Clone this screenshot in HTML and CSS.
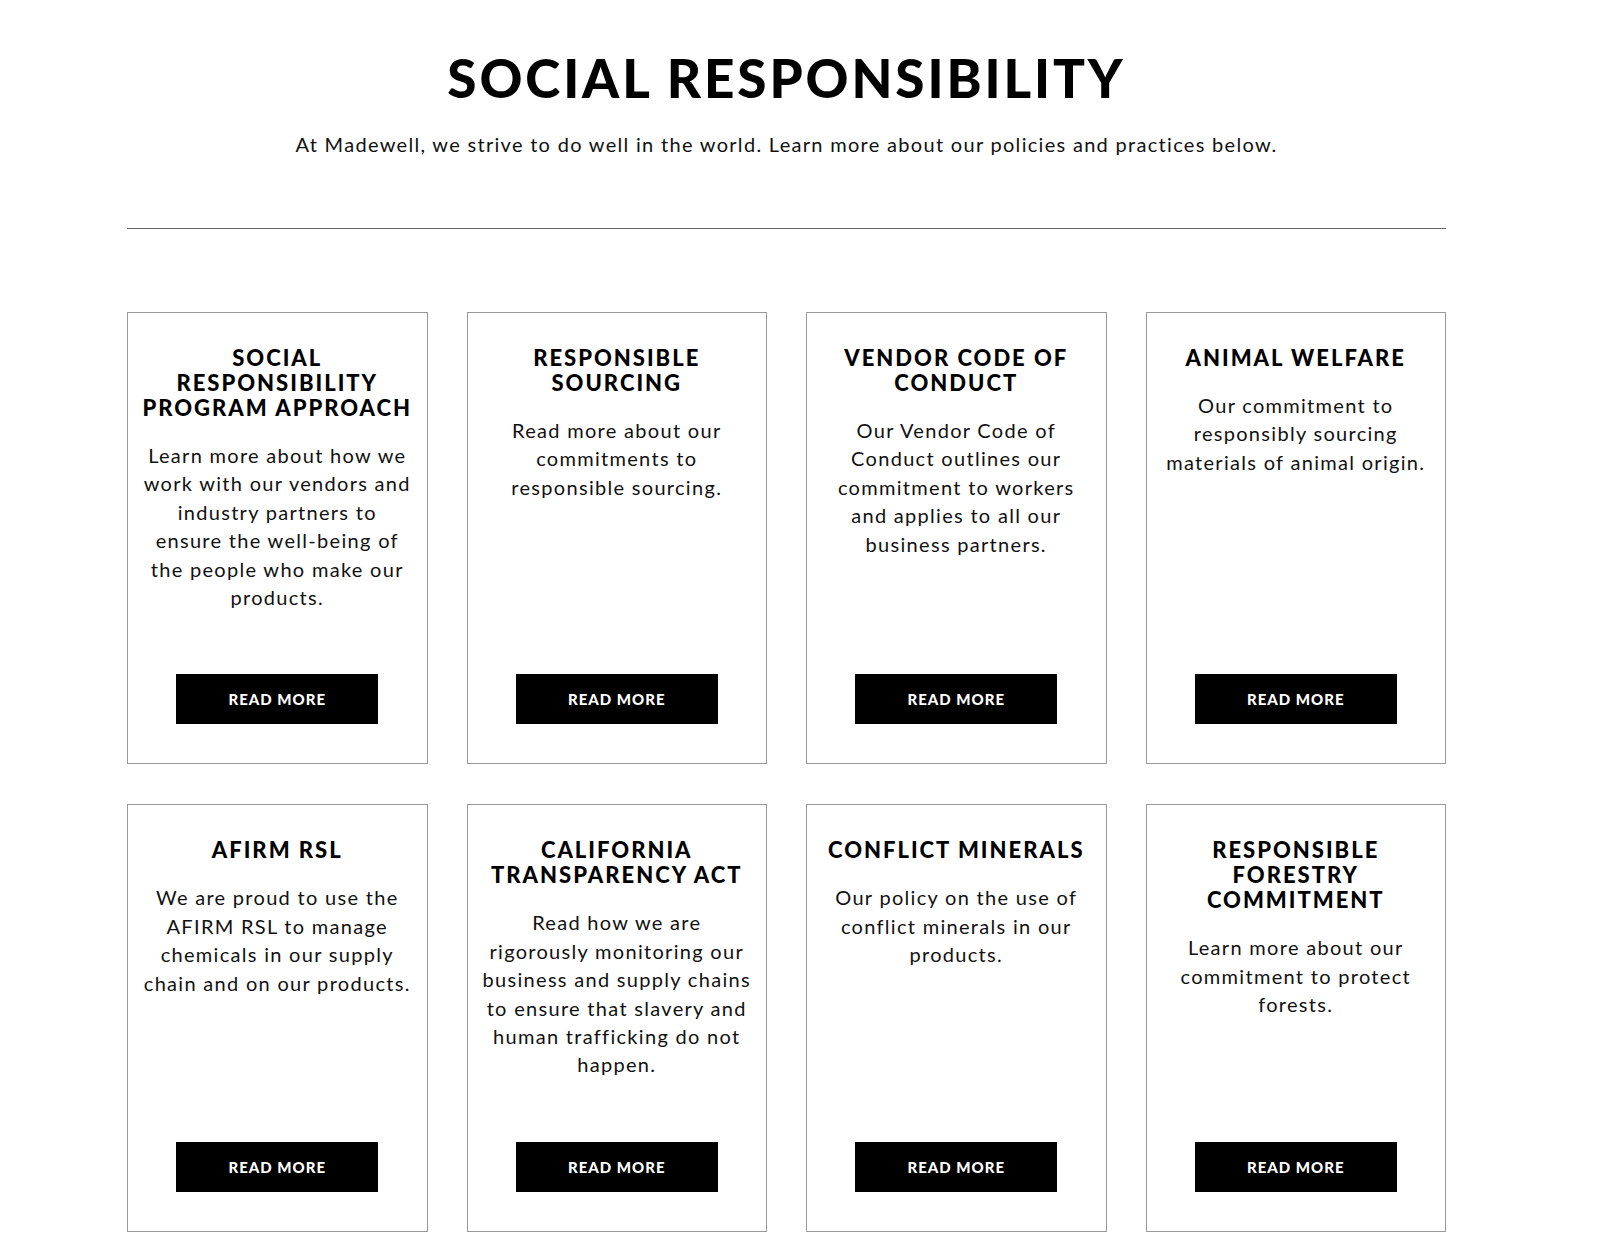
FILE: index.html
```html
<!DOCTYPE html>
<html lang="en">
<head>
  <meta charset="UTF-8">
  <title>Social Responsibility</title>
  <link rel="stylesheet" href="styles.css">
</head>
<body>
  <div class="page">
    <header class="page-header">
      <h1>Social Responsibility</h1>
      <p class="intro">At Madewell, we strive to do well in the world. Learn more about our policies and practices below.</p>
    </header>

    <hr class="divider">

    <div class="card-grid">
      <div class="card">
        <h3>Social Responsibility Program Approach</h3>
        <p>Learn more about how we work with our vendors and industry partners to ensure the well-being of the people who make our products.</p>
        <a href="#" class="btn">Read More</a>
      </div>

      <div class="card">
        <h3>Responsible Sourcing</h3>
        <p>Read more about our commitments to responsible sourcing.</p>
        <a href="#" class="btn">Read More</a>
      </div>

      <div class="card">
        <h3>Vendor Code of Conduct</h3>
        <p>Our Vendor Code of Conduct outlines our commitment to workers and applies to all our business partners.</p>
        <a href="#" class="btn">Read More</a>
      </div>

      <div class="card">
        <h3>Animal Welfare</h3>
        <p>Our commitment to responsibly sourcing materials of animal origin.</p>
        <a href="#" class="btn">Read More</a>
      </div>

      <div class="card">
        <h3>AFIRM RSL</h3>
        <p>We are proud to use the AFIRM RSL to manage chemicals in our supply chain and on our products.</p>
        <a href="#" class="btn">Read More</a>
      </div>

      <div class="card">
        <h3>California Transparency Act</h3>
        <p>Read how we are rigorously monitoring our business and supply chains to ensure that slavery and human trafficking do not happen.</p>
        <a href="#" class="btn">Read More</a>
      </div>

      <div class="card">
        <h3>Conflict Minerals</h3>
        <p>Our policy on the use of conflict minerals in our products.</p>
        <a href="#" class="btn">Read More</a>
      </div>

      <div class="card">
        <h3>Responsible Forestry Commitment</h3>
        <p>Learn more about our commitment to protect forests.</p>
        <a href="#" class="btn">Read More</a>
      </div>
    </div>
  </div>
</body>
</html>
```

FILE: styles.css
```css
* {
  box-sizing: border-box;
}

body {
  margin: 0;
  padding: 0;
  background: #fff;
  color: #111;
  font-family: Lato, "Open Sans", sans-serif;
}

.page {
  width: 1319px;
  margin-left: 127px;
}

.page-header {
  padding-top: 46px;
  text-align: center;
}

h1 {
  margin: 0;
  font-size: 53px;
  font-weight: 900;
  line-height: 64px;
  letter-spacing: 2.9px;
  text-transform: uppercase;
  color: #000;
}

.intro {
  margin: 20px 0 0;
  font-size: 20px;
  line-height: 28px;
  letter-spacing: 1.3px;
}

.divider {
  margin: 70px 0 0;
  border: none;
  border-top: 1px solid #666;
}

.card-grid {
  display: grid;
  grid-template-columns: repeat(4, 1fr);
  gap: 40px 39px;
  margin-top: 83px;
}

.card {
  display: flex;
  flex-direction: column;
  align-items: center;
  padding: 32px 14px 39px;
  border: 1px solid #999;
  text-align: center;
}

.card h3 {
  margin: 0;
  font-size: 22px;
  font-weight: 900;
  line-height: 25px;
  letter-spacing: 2px;
  text-transform: uppercase;
  color: #000;
}

.card p {
  margin: 21px 0 63px;
  font-size: 20px;
  line-height: 28.4px;
  letter-spacing: 1.3px;
}

.btn {
  display: flex;
  align-items: center;
  justify-content: center;
  width: 202px;
  height: 50px;
  margin-top: auto;
  background: #000;
  color: #fff;
  font-size: 15px;
  font-weight: 900;
  letter-spacing: 1px;
  text-decoration: none;
  text-transform: uppercase;
}
```
